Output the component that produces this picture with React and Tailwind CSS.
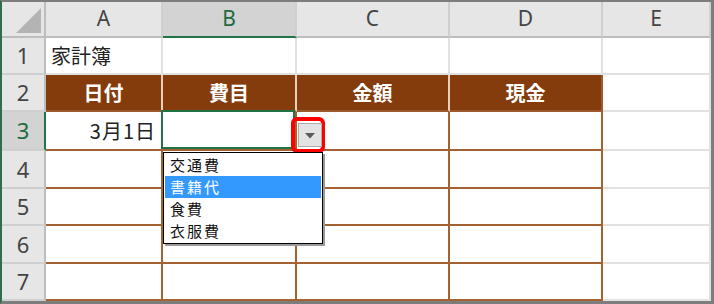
import React from 'react';

const cols = ['A', 'B', 'C', 'D', 'E'];
const rowH = ['h-[37px]', 'h-[37px]', 'h-[39px]', 'h-[38px]', 'h-[37px]', 'h-[38px]', 'h-[37px]'];
const heads = ['日付', '費目', '金額', '現金'];
const options = ['交通費', '書籍代', '食費', '衣服費'];

const jp = { fontFamily: '"Noto Sans CJK JP", "Noto Sans", sans-serif' };
const ui = { fontFamily: '"Noto Sans", "Liberation Sans", sans-serif' };

const ColHeader = ({ label, selected }) => (
  <div
    className={`flex items-center justify-center border-r-2 border-r-[#cfcfcf] border-b-2 text-[21px] ${
      selected
        ? 'bg-[#d3d3d3] border-b-[#217346] text-[#1e6b40]'
        : 'bg-[#e6e6e6] border-b-[#bdbdbd] text-[#444]'
    }`}
    style={ui}
  >
    {label}
  </div>
);

const RowHeader = ({ n, selected }) => (
  <div
    className={`flex items-center justify-center border-b-2 border-b-[#cfcfcf] border-r-2 text-[22px] ${
      selected
        ? 'bg-[#d3d3d3] border-r-[#217346] text-[#1e6b40]'
        : 'bg-[#e6e6e6] border-r-[#bdbdbd] text-[#444]'
    }`}
    style={ui}
  >
    {n}
  </div>
);

const DataValidation = () => (
  <>
    {/* active cell outline */}
    <div className="absolute -left-[2px] -top-[2px] right-0 bottom-0 border-2 border-[#217346] z-10" />
    {/* red highlight around the dropdown button */}
    <div className="absolute left-[128px] top-[5px] w-[34px] h-[36px] border-4 border-[#ff0000] rounded-[6px] z-20" />
    <div className="absolute left-[135px] top-[11px] w-[24px] h-[24px] bg-[#e3e3e3] border border-[#adadad] flex items-center justify-center z-20">
      <svg width="10" height="6" viewBox="0 0 10 6" className="mt-[2px]">
        <path d="M0 0 H10 L5 5.5 Z" fill="#5a5a5a" />
      </svg>
    </div>
    {/* list */}
    <div
      className="absolute left-0 top-[40px] w-[160px] bg-white border border-black shadow-[2px_2px_0_#9a9a9a] z-30 py-px"
      style={jp}
    >
      {options.map((o, i) => (
        <div
          key={o}
          className={`h-[22px] mx-px pl-[5px] text-[15px] tracking-[2px] leading-[22px] ${
            i === 1 ? 'bg-[#3399ff] text-white' : 'text-[#111]'
          }`}
        >
          {o}
        </div>
      ))}
    </div>
  </>
);

export default function App() {
  return (
    <div className="w-[714px] h-[304px] bg-white border-t-2 border-t-[#7d7d7d] border-l-2 border-l-[#2f6e46] border-r-[3px] border-r-[#7d7d7d] border-b-[3px] border-b-[#7d7d7d] overflow-hidden">
      <div className="grid grid-cols-[44px_117px_134px_153px_153px_108px]">
        {/* column header row */}
        <div className="h-[36px] bg-[#e6e6e6] border-r-2 border-r-[#bdbdbd] border-b-2 border-b-[#bdbdbd] relative">
          <svg width="26" height="26" viewBox="0 0 26 26" className="absolute left-[14px] top-[6px]">
            <path d="M25 0 V25 H0 Z" fill="#b4b4b4" />
          </svg>
        </div>
        {cols.map((c) => (
          <ColHeader key={c} label={c} selected={c === 'B'} />
        ))}

        {/* row 1 */}
        <RowHeader n={1} />
        <div
          className={`${rowH[0]} flex items-center pl-[5px] text-[20px] text-[#222] border-r-2 border-b-2 border-[#e1e1e1]`}
          style={jp}
        >
          家計簿
        </div>
        {[0, 1, 2, 3].map((i) => (
          <div key={i} className="border-r-2 border-b-2 border-[#e1e1e1]" />
        ))}

        {/* row 2: table header */}
        <RowHeader n={2} />
        {heads.map((h, i) => (
          <div
            key={h}
            className={`${rowH[1]} bg-[#843c0c] text-white font-bold text-[20px] flex items-center justify-center border-b-2 border-b-[#9c5a2e] border-r-2 ${
              i === 3 ? 'border-r-[#9c5a2e]' : 'border-r-[#ead0bc]'
            }`}
            style={jp}
          >
            {h}
          </div>
        ))}
        <div className="border-r-2 border-b-2 border-[#e1e1e1]" />

        {/* rows 3-7 */}
        {[3, 4, 5, 6, 7].map((r, ri) => (
          <React.Fragment key={r}>
            <RowHeader n={r} selected={r === 3} />
            {[0, 1, 2, 3].map((ci) => (
              <div
                key={ci}
                className={`${rowH[ri + 2]} relative border-r-2 border-b-2 border-[#a3622f] ${
                  r === 3 && ci === 0 ? 'flex items-center justify-end pr-[5px] text-[20px] text-[#222] tracking-[1px]' : ''
                }`}
                style={jp}
              >
                {r === 3 && ci === 0 && '3月1日'}
                {r === 3 && ci === 1 && <DataValidation />}
              </div>
            ))}
            <div className="border-r-2 border-b-2 border-[#e1e1e1]" />
          </React.Fragment>
        ))}
      </div>
    </div>
  );
}
